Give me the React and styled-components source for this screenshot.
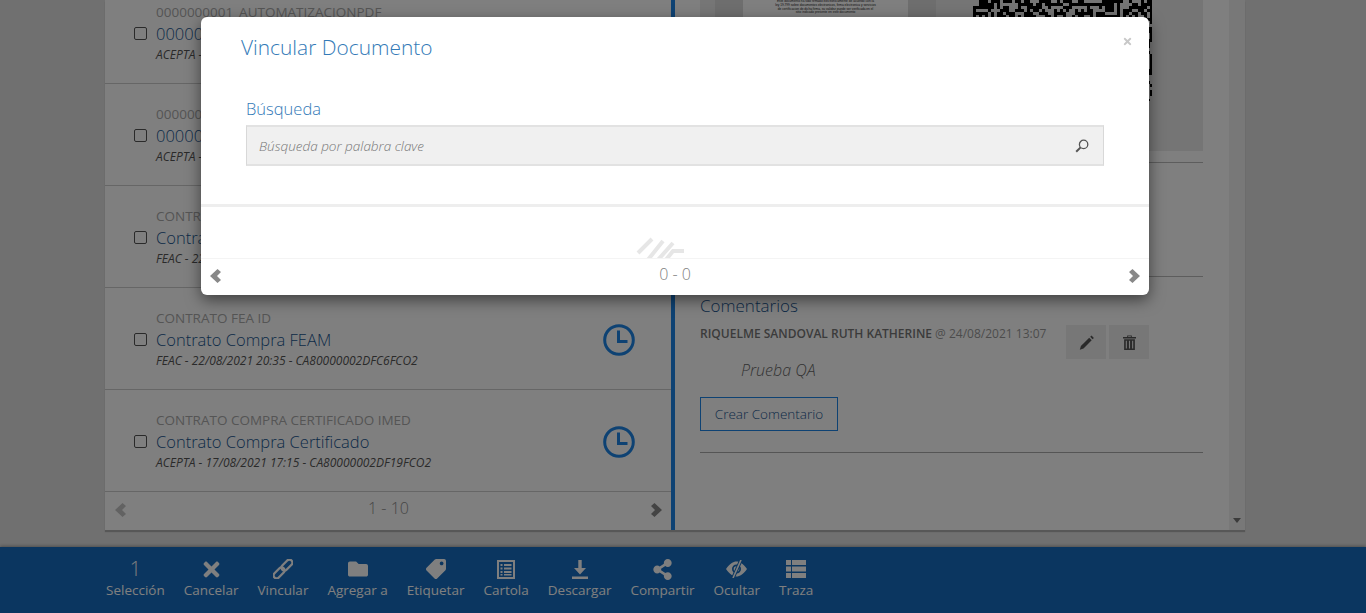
import { useMemo } from "react";
import styled, { createGlobalStyle } from "styled-components";
import { FaTimes, FaFolder, FaTag, FaShareAlt } from "react-icons/fa";

const GlobalStyle = createGlobalStyle`
  html, body { margin: 0; padding: 0; height: 100%; overflow: hidden; }
  body { font-family: "Open Sans", "Liberation Sans", sans-serif; background: #e0e0e0; }
  * { box-sizing: border-box; }
`;

const blue = "#1c84e6";
const textBlue = "#18558f";

const Page = styled.div`
  position: relative;
  height: 100vh;
  display: flex;
  flex-direction: column;
  overflow: hidden;
`;

const Main = styled.main`
  flex: 1;
  min-height: 0;
  padding: 0 121px 17px 105px;
  display: flex;
`;

const Panel = styled.div`
  flex: 1;
  display: flex;
  min-width: 0;
  background: #fff;
  box-shadow: 0 2px 1px rgba(0, 0, 0, 0.22);
`;

const LeftColumn = styled.section`
  width: 570px;
  flex-shrink: 0;
  display: flex;
  flex-direction: column;
  border-right: 4px solid ${blue};
`;

const List = styled.div`
  flex: 1;
  min-height: 0;
  overflow: hidden;
  display: flex;
  flex-direction: column;
  justify-content: flex-end;
`;

const Row = styled.article`
  flex: 0 0 102px;
  display: flex;
  align-items: center;
  padding: 0 36px 0 29px;
  border-bottom: 1px solid #ccc;
`;

const Check = styled.input.attrs({ type: "checkbox" })`
  appearance: none;
  width: 13px;
  height: 13px;
  margin: 2px 9px 0 0;
  border: 1px solid #555;
  border-radius: 2px;
  background: #fff;
  flex-shrink: 0;
`;

const RowText = styled.div`
  flex: 1;
  min-width: 0;
`;

const Kind = styled.div`
  font-size: 13.5px;
  line-height: 20px;
  color: #aaa;
`;

const Name = styled.div`
  font-size: 16.5px;
  line-height: 24px;
  font-weight: 300;
  color: ${textBlue};
`;

const Meta = styled.div`
  font-size: 12px;
  line-height: 18px;
  font-style: italic;
  color: #555;
`;

const ClockSlot = styled.span`
  display: flex;
  margin-top: 2px;
`;

const Pager = styled.div`
  flex: 0 0 38px;
  display: flex;
  align-items: center;
  justify-content: space-between;
  padding: 0 9px 3px 10px;
  color: #8c8c8c;
  font-size: 16px;
  font-weight: 300;
`;

const PagerCount = styled.span`
  margin-bottom: ${(p) => p.$lift}px;
`;

const Chevron = styled.svg`
  display: block;
  width: 11px;
  height: 14px;
  fill: ${(p) => p.$tone};
`;

const RightColumn = styled.section`
  flex: 1;
  min-width: 0;
  padding: 0 26px 0 25px;
  overflow: hidden;
`;

const ScrollTrack = styled.div`
  width: 16px;
  flex-shrink: 0;
  background: #f1f1f1;
  display: flex;
  align-items: flex-end;
  justify-content: center;
  padding-bottom: 7px;

  &::after {
    content: "";
    border: 4px solid transparent;
    border-top: 5px solid #777;
    border-bottom: 0;
  }
`;

const PreviewBlock = styled.div`
  padding-bottom: 11px;
  border-bottom: 1px solid #bbb;
`;

const Viewer = styled.div`
  height: 151px;
  display: flex;
  overflow: hidden;
  background: #eaeaea;
`;

const Band = styled.div`
  flex: 0 0 ${(p) => p.$w}px;
  background: ${(p) => p.$bg};
`;

const Sheet = styled.div`
  flex: 0 0 165px;
  background: #fff;
  padding: 0 32px;
  font-family: "Liberation Sans", sans-serif;
  font-size: 3.2px;
  line-height: 3.8px;
  color: #222;
  text-align: center;
`;

const QrArea = styled.div`
  flex: 1;
  padding-left: 37px;
`;

const InfoBlock = styled.div`
  height: 114px;
  border-bottom: 1px solid #bbb;
`;

const Comments = styled.div`
  padding-top: 17px;
  border-bottom: 1px solid #aaa;
  padding-bottom: 21px;
`;

const SectionTitle = styled.h3`
  margin: 0;
  font-size: 17px;
  line-height: 24px;
  font-weight: 300;
  color: ${textBlue};
`;

const CommentHead = styled.div`
  display: flex;
  justify-content: space-between;
  padding-right: 54px;
  margin-top: 7px;
`;

const Author = styled.div`
  font-size: 12px;
  line-height: 18px;
  color: #777;
  font-weight: 600;
  white-space: nowrap;
  align-self: flex-start;

  span {
    font-weight: 400;
    color: #999;
  }
`;

const IconActions = styled.div`
  display: flex;
  gap: 3px;
`;

const IconButton = styled.button`
  width: 40px;
  height: 34px;
  border: 0;
  padding: 0;
  background: #eee;
  color: #555;
  display: flex;
  align-items: center;
  justify-content: center;
`;

const CommentBody = styled.p`
  margin: 0;
  padding: 0 0 0 41px;
  font-size: 16px;
  line-height: 22px;
  font-style: italic;
  font-weight: 300;
  color: #666;
`;

const OutlineButton = styled.button`
  display: block;
  margin-top: 16px;
  width: 138px;
  height: 34px;
  padding: 0;
  border: 1px solid ${blue};
  background: #fff;
  color: ${textBlue};
  font-family: inherit;
  font-size: 13.5px;
  font-weight: 300;
`;

const ActionBar = styled.footer`
  flex: 0 0 66px;
  background: #166cc0;
  display: flex;
  gap: 19px;
  padding: 11px 0 0 106px;
  box-shadow: 0 -1px 3px rgba(0, 0, 0, 0.3);
`;

const Action = styled.div`
  display: flex;
  flex-direction: column;
  align-items: center;
  color: #fff;
`;

const ActionIcon = styled.span`
  height: 22px;
  display: flex;
  align-items: center;
  justify-content: center;
  font-size: ${(p) => p.$size || 20}px;
  line-height: 22px;
`;

const SelectionCount = styled.span`
  font-size: 20px;
  font-weight: 300;
`;

const FlippedTag = styled(FaTag)`
  transform: scaleX(-1);
`;

const ActionLabel = styled.span`
  font-size: 13.5px;
  line-height: 20px;
  white-space: nowrap;
`;

const Backdrop = styled.div`
  position: absolute;
  inset: 0;
  background: rgba(0, 0, 0, 0.5);
`;

const Modal = styled.div`
  position: absolute;
  left: 201px;
  top: 17px;
  width: 948px;
  height: 278px;
  background: #fff;
  border-radius: 6px;
  box-shadow: 0 5px 15px rgba(0, 0, 0, 0.5);
  display: flex;
  flex-direction: column;
  overflow: hidden;
`;

const ModalHeader = styled.div`
  display: flex;
  justify-content: space-between;
  padding: 15px 16px 0 40px;
  height: 80px;
`;

const ModalTitle = styled.h2`
  margin: 0;
  font-size: 20.9px;
  line-height: 30px;
  font-weight: 300;
  color: #337ab7;
`;

const Close = styled.span`
  display: flex;
  margin-top: 4px;
  font-size: 11px;
  height: 13px;
  color: #c8c8c8;
`;

const SearchBlock = styled.div`
  padding: 0 45px;
  height: 110px;
  border-bottom: 3px solid #eee;
`;

const FieldLabel = styled.label`
  display: block;
  font-size: 16.5px;
  font-weight: 300;
  line-height: 24px;
  margin-bottom: 4px;
  color: #337ab7;
`;

const SearchBox = styled.div`
  height: 41px;
  display: flex;
  align-items: center;
  justify-content: space-between;
  padding: 0 14px 0 10px;
  background: #f0f0f0;
  border: 1px solid #d8d8d8;
  border-top: 2px solid #e2e2e2;
  border-bottom: 2px solid #e2e2e2;
`;

const SearchInput = styled.input`
  flex: 1;
  border: 0;
  outline: 0;
  padding-top: 2px;
  background: transparent;
  font-family: inherit;
  font-size: 13.5px;
  font-style: italic;
  font-weight: 300;
  color: #777;

  &::placeholder {
    color: #777;
    opacity: 1;
  }
`;

const Results = styled.div`
  flex: 1;
  min-height: 0;
  overflow: hidden;
  display: flex;
  justify-content: center;
  padding-top: 30px;
  padding-right: 28px;
`;

const ModalPager = styled.div`
  flex: 0 0 37px;
  display: flex;
  align-items: center;
  justify-content: space-between;
  padding: 0 9px 2px 9px;
  border-top: 1px solid #f4f4f4;
  color: #808080;
  font-size: 16px;
  font-weight: 300;
`;

const rows = [
  ["0000000001_AUTOMATIZACIONPDF", "0000000001 Automatizacion", "ACEPTA - 24/08/2021 12:10 - CA80000002E0A1FCO2"],
  ["0000000002_AUTOMATIZACIONPDF", "0000000002 Automatizacion", "ACEPTA - 23/08/2021 18:42 - CA80000002E011FCO2"],
  ["CONTRATO FEA ID", "Contrato Compra", "FEAC - 22/08/2021 20:40 - CA80000002DFC7FCO2"],
  ["CONTRATO FEA ID", "Contrato Compra FEAM", "FEAC - 22/08/2021 20:35 - CA80000002DFC6FCO2"],
  ["CONTRATO COMPRA CERTIFICADO IMED", "Contrato Compra Certificado", "ACEPTA - 17/08/2021 17:15 - CA80000002DF19FCO2"],
];

const ClockIcon = () => (
  <svg width="32" height="32" viewBox="0 0 32 32" fill="none" stroke={blue} strokeWidth="3">
    <circle cx="16" cy="16" r="14.3" />
    <path d="M15.5 6.5V17.5H24.5" />
  </svg>
);

const LeftChevron = ({ tone }) => (
  <Chevron $tone={tone} viewBox="0 0 11 14">
    <path d="M7.5 0 11 3 7 7l4 4-3.5 3L0 7z" />
  </Chevron>
);

const RightChevron = ({ tone }) => (
  <Chevron $tone={tone} viewBox="0 0 11 14">
    <path d="M3.5 0 0 3l4 4-4 4 3.5 3L11 7z" />
  </Chevron>
);

const LinkIcon = () => (
  <svg width="20" height="20" viewBox="0 0 20 20" fill="none" stroke="currentColor" strokeWidth="2.3">
    <g transform="rotate(-45 10 10)">
      <rect x="-2" y="7" width="13" height="6" rx="3" />
      <rect x="9" y="7" width="13" height="6" rx="3" />
    </g>
  </svg>
);

const CartolaIcon = () => (
  <svg width="18" height="19" viewBox="0 0 18 19" fill="currentColor">
    <path fillRule="evenodd" d="M0 0h18v19H0zM2 2v15h14V2z" />
    <path d="M3.5 4h2v2h-2zM7 4h7.5v2H7zM3.5 7.5h2v2h-2zM7 7.5h7.5v2H7zM3.5 11h2v2h-2zM7 11h7.5v2H7zM3.5 14h2v1.5h-2zM7 14h7.5v1.5H7z" />
  </svg>
);

const DownloadIcon = () => (
  <svg width="16" height="19" viewBox="0 0 16 19" fill="currentColor">
    <path d="M6.3 0h3.4v8H14l-6 6.5L2 8h4.3z" />
    <rect x="0" y="16.5" width="16" height="2.5" />
  </svg>
);

const EyeOffIcon = () => (
  <svg width="21" height="18" viewBox="0 0 21 18" fill="currentColor">
    <path fillRule="evenodd" d="M0 9C4 3.5 7 1.5 10.5 1.5S17 3.5 21 9c-4 5.5-7 7.5-10.5 7.5S4 14.500 0 9zm10.500-4.500a4.500 4.500 0 1 0 0 9 4.500 4.500 0 0 0 0-9z" />
    <circle cx="10.5" cy="9" r="2.8" />
    <path d="M15 0 7 18" stroke="#166cc0" strokeWidth="3.5" />
    <path d="M15 0 7 18" stroke="currentColor" strokeWidth="1.6" />
  </svg>
);

const TraceIcon = () => (
  <svg width="20" height="18" viewBox="0 0 20 18" fill="currentColor">
    <path d="M0 0h5v5H0zM6 0h14v5H6zM0 6.5h5v5H0zM6 6.5h14v5H6zM0 13h5v5H0zM6 13h14v5H6z" />
  </svg>
);

const PencilIcon = () => (
  <svg width="15" height="15" viewBox="0 0 15 15" fill="currentColor">
    <path d="M10.2 2.8 12.7 5.3 4.5 13.5 0.8 14.700 1.900 11.100z" />
    <path d="M11.2 1.8 12.5.5 14.900 2.900 13.600 4.300z" />
  </svg>
);

const TrashIcon = () => (
  <svg width="13" height="15" viewBox="0 0 14 16" fill="currentColor">
    <path d="M4.5 2V.5h5V2H14v1.6H0V2zM5.5 2h3v-.6h-3z" />
    <path d="M1.2 4.5h11.6V16H1.2zM3 6v8.5h1.2V6zm3.4 0v8.5h1.2V6zm3.4 0v8.5H11V6z" fillRule="evenodd" />
  </svg>
);

const SearchIcon = () => (
  <svg width="14" height="14" viewBox="0 0 14 14" fill="none" stroke="#555">
    <circle cx="8.6" cy="5.4" r="4.2" strokeWidth="1.3" />
    <path d="M5.6 8.4 1.2 12.8" strokeWidth="2" />
  </svg>
);

const LoaderMark = () => (
  <svg width="50" height="24" viewBox="0 0 50 24" fill="none" stroke="#e6e6e6" strokeWidth="4">
    <path d="M2 16 16 2M11 24 27 4M21 24 37 6M29 24 37 14H48" />
  </svg>
);

function QrCode() {
  // modulos pseudoaleatorios, solo se ve el borde que asoma tras el modal
  const d = useMemo(() => {
    let seed = 7919;
    let out = "";
    for (let y = 0; y < 34; y++) {
      for (let x = 0; x < 60; x++) {
        seed = (seed * 1103515245 + 12345) & 0x7fffffff;
        if ((seed >> 16) % 100 < 56) out += `M${x * 3} ${y * 3}h3v3h-3z`;
      }
    }
    return out;
  }, []);
  return (
    <svg width="179" height="101" viewBox="0 0 179 101" style={{ display: "block" }}>
      <path d={d} fill="#000" />
    </svg>
  );
}

const actions = [
  ["Selección", <SelectionCount>1</SelectionCount>],
  ["Cancelar", <FaTimes />, 23],
  ["Vincular", <LinkIcon />],
  ["Agregar a", <FaFolder />, 20],
  ["Etiquetar", <FlippedTag />, 20],
  ["Cartola", <CartolaIcon />],
  ["Descargar", <DownloadIcon />],
  ["Compartir", <FaShareAlt />, 21],
  ["Ocultar", <EyeOffIcon />],
  ["Traza", <TraceIcon />],
];

export default function App() {
  return (
    <Page>
      <GlobalStyle />
      <Main>
        <Panel>
          <LeftColumn>
            <List>
              {rows.map(([kind, name, meta]) => (
                <Row key={meta}>
                  <Check />
                  <RowText>
                    <Kind>{kind}</Kind>
                    <Name>{name}</Name>
                    <Meta>{meta}</Meta>
                  </RowText>
                  <ClockSlot><ClockIcon /></ClockSlot>
                </Row>
              ))}
            </List>
            <Pager>
              <LeftChevron tone="#c4c4c4" />
              <PagerCount $lift={4}>1 - 10</PagerCount>
              <RightChevron tone="#888" />
            </Pager>
          </LeftColumn>
          <RightColumn>
            <PreviewBlock>
              <Viewer>
                <Band $w={15} $bg="#ececec" />
                <Band $w={28} $bg="#dcdcdc" />
                <Sheet>
                  Este documento ha sido firmado electronicamente de acuerdo con la ley 19.799 sobre documentos
                  electronicos, firma electronica y servicios de certificacion de dicha firma, su validez
                  puede ser verificada en el sitio indicado presente en este documento
                </Sheet>
                <Band $w={28} $bg="#dcdcdc" />
                <QrArea><QrCode /></QrArea>
              </Viewer>
            </PreviewBlock>
            <InfoBlock />
            <Comments>
              <SectionTitle>Comentarios</SectionTitle>
              <CommentHead>
                <Author>RIQUELME SANDOVAL RUTH KATHERINE <span>@ 24/08/2021 13:07</span></Author>
                <IconActions>
                  <IconButton><PencilIcon /></IconButton>
                  <IconButton><TrashIcon /></IconButton>
                </IconActions>
              </CommentHead>
              <CommentBody>Prueba QA</CommentBody>
              <OutlineButton>Crear Comentario</OutlineButton>
            </Comments>
          </RightColumn>
          <ScrollTrack />
        </Panel>
      </Main>
      <ActionBar>
        {actions.map(([label, icon, size]) => (
          <Action key={label}>
            <ActionIcon $size={size}>{icon}</ActionIcon>
            <ActionLabel>{label}</ActionLabel>
          </Action>
        ))}
      </ActionBar>
      <Backdrop />
      <Modal>
        <ModalHeader>
          <ModalTitle>Vincular Documento</ModalTitle>
          <Close><FaTimes /></Close>
        </ModalHeader>
        <SearchBlock>
          <FieldLabel>Búsqueda</FieldLabel>
          <SearchBox>
            <SearchInput placeholder="Búsqueda por palabra clave" />
            <SearchIcon />
          </SearchBox>
        </SearchBlock>
        <Results><LoaderMark /></Results>
        <ModalPager>
          <LeftChevron tone="#888" />
          <PagerCount $lift={4}>0 - 0</PagerCount>
          <RightChevron tone="#888" />
        </ModalPager>
      </Modal>
    </Page>
  );
}
